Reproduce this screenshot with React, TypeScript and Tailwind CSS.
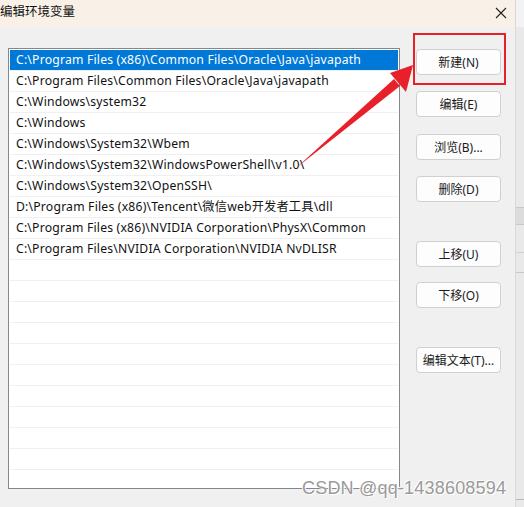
import React from "react";

const items = [
  "C:\\Program Files (x86)\\Common Files\\Oracle\\Java\\javapath",
  "C:\\Program Files\\Common Files\\Oracle\\Java\\javapath",
  "C:\\Windows\\system32",
  "C:\\Windows",
  "C:\\Windows\\System32\\Wbem",
  "C:\\Windows\\System32\\WindowsPowerShell\\v1.0\\",
  "C:\\Windows\\System32\\OpenSSH\\",
  "D:\\Program Files (x86)\\Tencent\\微信web开发者工具\\dll",
  "C:\\Program Files (x86)\\NVIDIA Corporation\\PhysX\\Common",
  "C:\\Program Files\\NVIDIA Corporation\\NVIDIA NvDLISR",
];

const rows = [...items, ...Array(11).fill("")];

const font = { fontFamily: '"Noto Sans", "Noto Sans CJK SC", sans-serif' };

function Btn({ label, className = "" }: { label: string; className?: string }) {
  return (
    <div
      className={
        "h-[26px] w-[85px] rounded-[4px] border border-[#d0d0d0] bg-[#fdfdfd] flex items-center justify-center text-[12px] text-[#1a1a1a] pt-[1px] " +
        className
      }
    >
      {label}
    </div>
  );
}

export default function App() {
  return (
    <div
      className="relative w-[524px] h-[507px] overflow-hidden flex bg-[#f0f0f0]"
      style={font}
    >
      <div className="w-[515px] h-full flex flex-col">
        <div className="h-[27px] bg-[#f9f1e8] flex items-center justify-between pr-[8px]">
          <span className="text-[12.5px] text-[#111] leading-none -mt-[2px]">编辑环境变量</span>
          <svg width="12" height="12" viewBox="0 0 12 12" className="-mt-[2px]">
            <path d="M1 1 L11 11 M11 1 L1 11" stroke="#222" strokeWidth="1.1" />
          </svg>
        </div>
        <div className="flex-1 flex pt-[21px] pl-[8px]">
          <div className="w-[392px] h-[441px] border border-[#828790] bg-white p-[1px] overflow-hidden">
            {rows.map((r, i) => (
              <div
                key={i}
                className={
                  "h-[21px] flex items-center pl-[6px] pt-[1px] text-[12.2px] tracking-[0.2px] whitespace-nowrap border-b border-[#f0f0f0] " +
                  (i === 0 ? "bg-[#0078d7] text-white border-[#0078d7]" : "text-[#111]")
                }
              >
                {r}
              </div>
            ))}
          </div>
          <div className="ml-[16px] flex flex-col pt-[1px]">
            <Btn label="新建(N)" />
            <Btn label="编辑(E)" className="mt-[16px]" />
            <Btn label="浏览(B)..." className="mt-[17px]" />
            <Btn label="删除(D)" className="mt-[16px]" />
            <Btn label="上移(U)" className="mt-[39px]" />
            <Btn label="下移(O)" className="mt-[15px]" />
            <Btn label="编辑文本(T)..." className="mt-[39px]" />
          </div>
        </div>
      </div>
      <div className="flex-1 h-full bg-[#e9e9e9] border-l border-[#d9d9d9] flex flex-col">
        <div className="h-[27px] bg-[#f3f3f3]" />
        <div className="h-[180px]" />
        <div className="h-[18px] border-y border-[#c8c8c8] bg-[#dcdcdc]" />
        <div className="h-[28px] border-b border-[#d0d0d0]" />
        <div className="h-[20px] border-b border-[#c8c8c8]" />
        <div className="flex-1" />
        <div className="h-[8px] border-t border-[#b8b8b8]" />
      </div>

      <div className="absolute left-[413px] top-[33px] w-[93px] h-[52px] border-2 border-[#e8202a]" />

      <svg className="absolute left-0 top-0 pointer-events-none" width="524" height="507">
        <polygon points="296,168 394,79 400,86" fill="#e8202a" />
        <polygon points="413,65 390,73 406,92" fill="#e8202a" />
      </svg>

      <div
        className="absolute left-[302px] top-[479px] text-[18px] text-[#9a9a9a] tracking-[0.2px] leading-none"
        style={{ fontFamily: '"Liberation Sans", Arial, sans-serif', textShadow: "1px 1px 0 #fff, -1px -1px 0 #fff" }}
      >
        CSDN @qq-1438608594
      </div>
    </div>
  );
}
